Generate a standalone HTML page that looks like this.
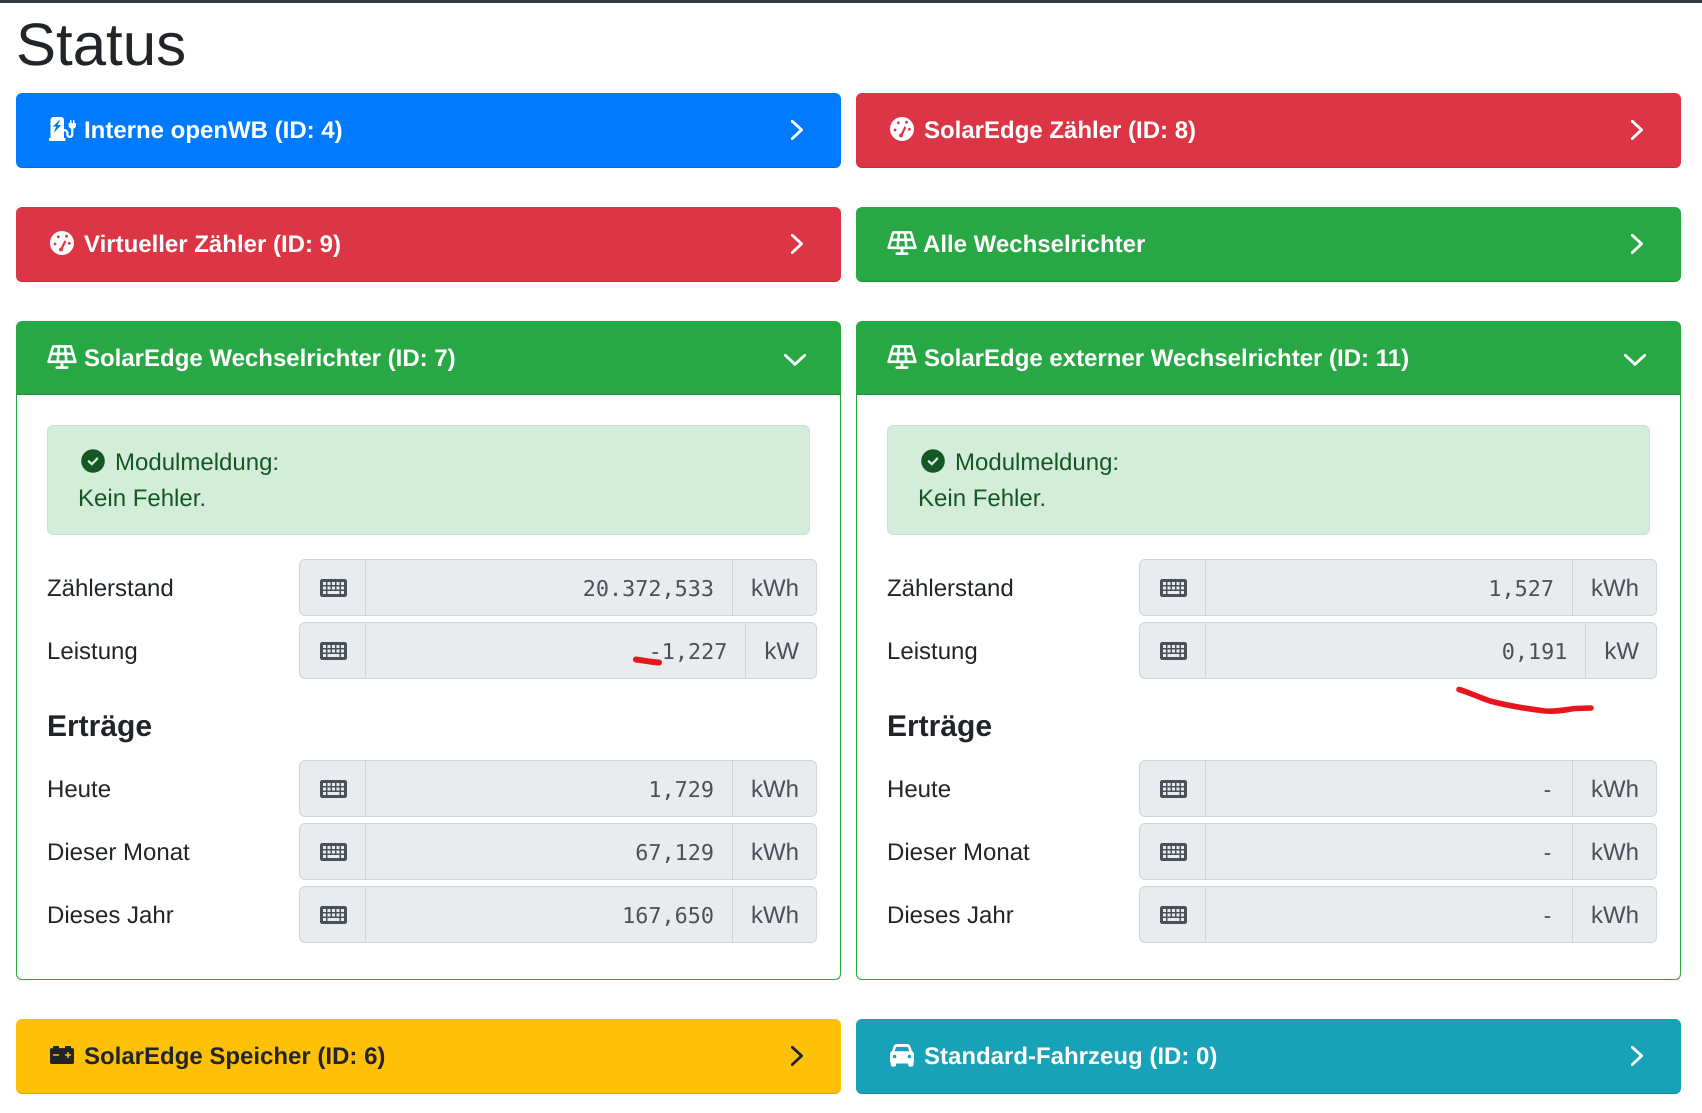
<!DOCTYPE html>
<html lang="de"><head><meta charset="utf-8"><title>Status</title>
<style>
html,body{margin:0;padding:0;background:#fff}
body{position:relative;width:1702px;height:1113px;overflow:hidden;font-family:"Liberation Sans",sans-serif;font-size:24px;color:#212529;text-rendering:geometricPrecision}
#top{position:absolute;left:0;top:0;width:1702px;height:3px;background:#343a40}
h1{position:absolute;left:16px;top:9px;margin:0;font-size:60px;line-height:72px;font-weight:400}
.hd{position:absolute;width:825px;height:75px;box-sizing:border-box;border-radius:6px;border-bottom:1px solid rgba(0,0,0,.125);color:#fff}
.hd b{position:absolute;left:68px;top:20px;line-height:36px;font-weight:700;white-space:nowrap}
.hd svg{position:absolute}
.hd.open{border-radius:6px 6px 0 0;height:74px}
.blue{background:#007bff}.red{background:#dc3545}.green{background:#28a745}.yellow{background:#ffc107;color:#212529}.teal{background:#17a2b8}
.box{position:absolute;top:394px;width:825px;height:586px;box-sizing:border-box;border:1px solid #28a745;border-top:0;border-radius:0 0 6px 6px}
.alert{position:absolute;top:425px;width:763px;height:110px;box-sizing:border-box;background:#d4edda;border:1px solid #c3e6cb;border-radius:6px;color:#155724}
.alert span{position:absolute;line-height:36px;white-space:nowrap}
.alert svg{position:absolute;left:33px;top:23px}
.lb{position:absolute;line-height:36px;white-space:nowrap}
.h{font-weight:700;font-size:30px}
.g{position:absolute;width:518px;height:57px;box-sizing:border-box;background:#e9ecef;border:1px solid #ced4da;border-radius:6px;display:flex;align-items:stretch;color:#495057}
.g .i{width:66px;flex:none;border-right:1px solid #ced4da;box-sizing:border-box;position:relative}
.g .i svg{position:absolute;left:19.5px;top:16px}
.g .v{flex:1;text-align:right;padding-right:18px;line-height:59px;font-family:"DejaVu Sans Mono","Liberation Mono",monospace;font-size:21.8px}
.g .u{flex:none;padding:0 17px 0 18px;border-left:1px solid #ced4da;line-height:58px}
#ink{position:absolute;left:0;top:0}
</style></head><body>
<div id="top"></div>
<h1>Status</h1>

<div class="hd blue" style="left:16px;top:93px"><svg style="left:33px;top:24px" width="27" height="24" viewBox="0 0 576 512" fill="#fff"><path d="M336 448H16c-8.84 0-16 7.16-16 16v32c0 8.84 7.16 16 16 16h320c8.84 0 16-7.16 16-16v-32c0-8.84-7.16-16-16-16zm208-320V80c0-8.84-7.16-16-16-16s-16 7.16-16 16v48h-32V80c0-8.84-7.16-16-16-16s-16 7.16-16 16v48h-16c-8.84 0-16 7.16-16 16v32c0 35.76 23.62 65.69 56 75.93v118.49c0 13.95-9.5 26.92-23.26 29.19C431.22 402.5 416 388.99 416 372v-28c0-48.6-39.4-88-88-88h-8V64c0-35.35-28.65-64-64-64H96C60.65 0 32 28.65 32 64v400h288V304h8c22.09 0 40 17.91 40 40v24.61c0 39.67 28.92 75.16 68.41 79.01C481.71 452.05 520 416.41 520 372V251.93c32.38-10.24 56-40.17 56-75.93v-32c0-8.84-7.16-16-16-16h-16z"/><path fill="#007bff" d="M215 72 80 205h72L100 341 262 170h-78l52-98z"/></svg><b>Interne openWB (ID: 4)</b><svg style="left:775px;top:27px" width="12" height="20" viewBox="0 0 12 20" fill="none" stroke="#fff" stroke-width="2.8" stroke-linecap="round" stroke-linejoin="round"><path d="M1.2 1.2 10.6 9.8 1.2 18.6"/></svg></div>
<div class="hd red" style="left:856px;top:93px"><svg style="left:34px;top:24px" width="24" height="24" viewBox="0 0 24 24"><circle cx="12" cy="12" r="12" fill="#fff"/><g fill="#dc3545"><circle cx="5" cy="13" r="1.4"/><circle cx="8.3" cy="5.8" r="1.4"/><circle cx="16.5" cy="5.2" r="1.4"/><circle cx="19.3" cy="12.3" r="1.4"/><circle cx="11" cy="18.5" r="1.9"/></g><path d="M11 19 15 10.7" stroke="#dc3545" stroke-width="2.2" stroke-linecap="round"/></svg><b>SolarEdge Zähler (ID: 8)</b><svg style="left:775px;top:27px" width="12" height="20" viewBox="0 0 12 20" fill="none" stroke="#fff" stroke-width="2.8" stroke-linecap="round" stroke-linejoin="round"><path d="M1.2 1.2 10.6 9.8 1.2 18.6"/></svg></div>
<div class="hd red" style="left:16px;top:207px"><svg style="left:34px;top:24px" width="24" height="24" viewBox="0 0 24 24"><circle cx="12" cy="12" r="12" fill="#fff"/><g fill="#dc3545"><circle cx="5" cy="13" r="1.4"/><circle cx="8.3" cy="5.8" r="1.4"/><circle cx="16.5" cy="5.2" r="1.4"/><circle cx="19.3" cy="12.3" r="1.4"/><circle cx="11" cy="18.5" r="1.9"/></g><path d="M11 19 15 10.7" stroke="#dc3545" stroke-width="2.2" stroke-linecap="round"/></svg><b>Virtueller Zähler (ID: 9)</b><svg style="left:775px;top:27px" width="12" height="20" viewBox="0 0 12 20" fill="none" stroke="#fff" stroke-width="2.8" stroke-linecap="round" stroke-linejoin="round"><path d="M1.2 1.2 10.6 9.8 1.2 18.6"/></svg></div>
<div class="hd green" style="left:856px;top:207px"><svg style="left:31px;top:24px" width="30" height="24" viewBox="0 0 30 24" fill="none" stroke="#fff" stroke-linecap="round" stroke-linejoin="round"><path stroke-width="2.6" d="M6.2 1.4H23.8L28.4 16.8H1.6ZM12 1.4 10.6 16.8M18 1.4 19.4 16.8M3.9 8.8H26.1"/><path stroke-width="2.8" d="M15 17V22.6M9.9 22.6H20.1"/></svg><b style="left:67px">Alle Wechselrichter</b><svg style="left:775px;top:27px" width="12" height="20" viewBox="0 0 12 20" fill="none" stroke="#fff" stroke-width="2.8" stroke-linecap="round" stroke-linejoin="round"><path d="M1.2 1.2 10.6 9.8 1.2 18.6"/></svg></div>

<div class="box" style="left:16px"></div>
<div class="box" style="left:856px"></div>

<div class="hd green open" style="left:16px;top:321px"><svg style="left:31px;top:24px" width="30" height="24" viewBox="0 0 30 24" fill="none" stroke="#fff" stroke-linecap="round" stroke-linejoin="round"><path stroke-width="2.6" d="M6.2 1.4H23.8L28.4 16.8H1.6ZM12 1.4 10.6 16.8M18 1.4 19.4 16.8M3.9 8.8H26.1"/><path stroke-width="2.8" d="M15 17V22.6M9.9 22.6H20.1"/></svg><b>SolarEdge Wechselrichter (ID: 7)</b><svg style="left:768px;top:33px" width="22" height="12" viewBox="0 0 22 12" fill="none" stroke="#fff" stroke-width="2.8" stroke-linecap="round" stroke-linejoin="round"><path d="M1.3 1.3 11 10.3 20.7 1.3"/></svg></div>
<div class="hd green open" style="left:856px;top:321px"><svg style="left:31px;top:24px" width="30" height="24" viewBox="0 0 30 24" fill="none" stroke="#fff" stroke-linecap="round" stroke-linejoin="round"><path stroke-width="2.6" d="M6.2 1.4H23.8L28.4 16.8H1.6ZM12 1.4 10.6 16.8M18 1.4 19.4 16.8M3.9 8.8H26.1"/><path stroke-width="2.8" d="M15 17V22.6M9.9 22.6H20.1"/></svg><b>SolarEdge externer Wechselrichter (ID: 11)</b><svg style="left:768px;top:33px" width="22" height="12" viewBox="0 0 22 12" fill="none" stroke="#fff" stroke-width="2.8" stroke-linecap="round" stroke-linejoin="round"><path d="M1.3 1.3 11 10.3 20.7 1.3"/></svg></div>

<div class="alert" style="left:47px"><svg width="24" height="24" viewBox="0 0 24 24"><circle cx="12" cy="12" r="11.8" fill="#155724"/><path d="M7.8 12.4 10.8 15.2 16.2 9.6" fill="none" stroke="#d4edda" stroke-width="2.3" stroke-linecap="round" stroke-linejoin="round"/></svg><span style="left:67px;top:19px">Modulmeldung:</span><span style="left:30px;top:55px">Kein Fehler.</span></div>
<div class="alert" style="left:887px"><svg width="24" height="24" viewBox="0 0 24 24"><circle cx="12" cy="12" r="11.8" fill="#155724"/><path d="M7.8 12.4 10.8 15.2 16.2 9.6" fill="none" stroke="#d4edda" stroke-width="2.3" stroke-linecap="round" stroke-linejoin="round"/></svg><span style="left:67px;top:19px">Modulmeldung:</span><span style="left:30px;top:55px">Kein Fehler.</span></div>

<div class="lb" style="left:47px;top:571px">Zählerstand</div>
<div class="lb" style="left:47px;top:634px">Leistung</div>
<div class="lb h" style="left:47px;top:709px">Erträge</div>
<div class="lb" style="left:47px;top:772px">Heute</div>
<div class="lb" style="left:47px;top:835px">Dieser Monat</div>
<div class="lb" style="left:47px;top:898px">Dieses Jahr</div>
<div class="lb" style="left:887px;top:571px">Zählerstand</div>
<div class="lb" style="left:887px;top:634px">Leistung</div>
<div class="lb h" style="left:887px;top:709px">Erträge</div>
<div class="lb" style="left:887px;top:772px">Heute</div>
<div class="lb" style="left:887px;top:835px">Dieser Monat</div>
<div class="lb" style="left:887px;top:898px">Dieses Jahr</div>

<div class="g" style="left:299px;top:559px"><div class="i"><svg width="27" height="24" viewBox="0 0 576 512" fill="#495057" fill-rule="evenodd"><path d="M48 64h480a48 48 0 0 1 48 48v288a48 48 0 0 1-48 48H48a48 48 0 0 1-48-48V112a48 48 0 0 1 48-48zM64 128h64v64H64zM160 128h64v64h-64zM256 128h64v64h-64zM352 128h64v64h-64zM448 128h64v64h-64zM64 224h64v64H64zM160 224h64v64h-64zM256 224h64v64h-64zM352 224h64v64h-64zM448 224h64v64h-64zM64 320h64v64H64zM160 320h256v64H160zM448 320h64v64h-64z"/></svg></div><div class="v">20.372,533</div><div class="u">kWh</div></div>
<div class="g" style="left:299px;top:622px"><div class="i"><svg width="27" height="24" viewBox="0 0 576 512" fill="#495057" fill-rule="evenodd"><path d="M48 64h480a48 48 0 0 1 48 48v288a48 48 0 0 1-48 48H48a48 48 0 0 1-48-48V112a48 48 0 0 1 48-48zM64 128h64v64H64zM160 128h64v64h-64zM256 128h64v64h-64zM352 128h64v64h-64zM448 128h64v64h-64zM64 224h64v64H64zM160 224h64v64h-64zM256 224h64v64h-64zM352 224h64v64h-64zM448 224h64v64h-64zM64 320h64v64H64zM160 320h256v64H160zM448 320h64v64h-64z"/></svg></div><div class="v">-1,227</div><div class="u">kW</div></div>
<div class="g" style="left:299px;top:760px"><div class="i"><svg width="27" height="24" viewBox="0 0 576 512" fill="#495057" fill-rule="evenodd"><path d="M48 64h480a48 48 0 0 1 48 48v288a48 48 0 0 1-48 48H48a48 48 0 0 1-48-48V112a48 48 0 0 1 48-48zM64 128h64v64H64zM160 128h64v64h-64zM256 128h64v64h-64zM352 128h64v64h-64zM448 128h64v64h-64zM64 224h64v64H64zM160 224h64v64h-64zM256 224h64v64h-64zM352 224h64v64h-64zM448 224h64v64h-64zM64 320h64v64H64zM160 320h256v64H160zM448 320h64v64h-64z"/></svg></div><div class="v">1,729</div><div class="u">kWh</div></div>
<div class="g" style="left:299px;top:823px"><div class="i"><svg width="27" height="24" viewBox="0 0 576 512" fill="#495057" fill-rule="evenodd"><path d="M48 64h480a48 48 0 0 1 48 48v288a48 48 0 0 1-48 48H48a48 48 0 0 1-48-48V112a48 48 0 0 1 48-48zM64 128h64v64H64zM160 128h64v64h-64zM256 128h64v64h-64zM352 128h64v64h-64zM448 128h64v64h-64zM64 224h64v64H64zM160 224h64v64h-64zM256 224h64v64h-64zM352 224h64v64h-64zM448 224h64v64h-64zM64 320h64v64H64zM160 320h256v64H160zM448 320h64v64h-64z"/></svg></div><div class="v">67,129</div><div class="u">kWh</div></div>
<div class="g" style="left:299px;top:886px"><div class="i"><svg width="27" height="24" viewBox="0 0 576 512" fill="#495057" fill-rule="evenodd"><path d="M48 64h480a48 48 0 0 1 48 48v288a48 48 0 0 1-48 48H48a48 48 0 0 1-48-48V112a48 48 0 0 1 48-48zM64 128h64v64H64zM160 128h64v64h-64zM256 128h64v64h-64zM352 128h64v64h-64zM448 128h64v64h-64zM64 224h64v64H64zM160 224h64v64h-64zM256 224h64v64h-64zM352 224h64v64h-64zM448 224h64v64h-64zM64 320h64v64H64zM160 320h256v64H160zM448 320h64v64h-64z"/></svg></div><div class="v">167,650</div><div class="u">kWh</div></div>

<div class="g" style="left:1139px;top:559px"><div class="i"><svg width="27" height="24" viewBox="0 0 576 512" fill="#495057" fill-rule="evenodd"><path d="M48 64h480a48 48 0 0 1 48 48v288a48 48 0 0 1-48 48H48a48 48 0 0 1-48-48V112a48 48 0 0 1 48-48zM64 128h64v64H64zM160 128h64v64h-64zM256 128h64v64h-64zM352 128h64v64h-64zM448 128h64v64h-64zM64 224h64v64H64zM160 224h64v64h-64zM256 224h64v64h-64zM352 224h64v64h-64zM448 224h64v64h-64zM64 320h64v64H64zM160 320h256v64H160zM448 320h64v64h-64z"/></svg></div><div class="v">1,527</div><div class="u">kWh</div></div>
<div class="g" style="left:1139px;top:622px"><div class="i"><svg width="27" height="24" viewBox="0 0 576 512" fill="#495057" fill-rule="evenodd"><path d="M48 64h480a48 48 0 0 1 48 48v288a48 48 0 0 1-48 48H48a48 48 0 0 1-48-48V112a48 48 0 0 1 48-48zM64 128h64v64H64zM160 128h64v64h-64zM256 128h64v64h-64zM352 128h64v64h-64zM448 128h64v64h-64zM64 224h64v64H64zM160 224h64v64h-64zM256 224h64v64h-64zM352 224h64v64h-64zM448 224h64v64h-64zM64 320h64v64H64zM160 320h256v64H160zM448 320h64v64h-64z"/></svg></div><div class="v">0,191</div><div class="u">kW</div></div>
<div class="g" style="left:1139px;top:760px"><div class="i"><svg width="27" height="24" viewBox="0 0 576 512" fill="#495057" fill-rule="evenodd"><path d="M48 64h480a48 48 0 0 1 48 48v288a48 48 0 0 1-48 48H48a48 48 0 0 1-48-48V112a48 48 0 0 1 48-48zM64 128h64v64H64zM160 128h64v64h-64zM256 128h64v64h-64zM352 128h64v64h-64zM448 128h64v64h-64zM64 224h64v64H64zM160 224h64v64h-64zM256 224h64v64h-64zM352 224h64v64h-64zM448 224h64v64h-64zM64 320h64v64H64zM160 320h256v64H160zM448 320h64v64h-64z"/></svg></div><div class="v">-</div><div class="u">kWh</div></div>
<div class="g" style="left:1139px;top:823px"><div class="i"><svg width="27" height="24" viewBox="0 0 576 512" fill="#495057" fill-rule="evenodd"><path d="M48 64h480a48 48 0 0 1 48 48v288a48 48 0 0 1-48 48H48a48 48 0 0 1-48-48V112a48 48 0 0 1 48-48zM64 128h64v64H64zM160 128h64v64h-64zM256 128h64v64h-64zM352 128h64v64h-64zM448 128h64v64h-64zM64 224h64v64H64zM160 224h64v64h-64zM256 224h64v64h-64zM352 224h64v64h-64zM448 224h64v64h-64zM64 320h64v64H64zM160 320h256v64H160zM448 320h64v64h-64z"/></svg></div><div class="v">-</div><div class="u">kWh</div></div>
<div class="g" style="left:1139px;top:886px"><div class="i"><svg width="27" height="24" viewBox="0 0 576 512" fill="#495057" fill-rule="evenodd"><path d="M48 64h480a48 48 0 0 1 48 48v288a48 48 0 0 1-48 48H48a48 48 0 0 1-48-48V112a48 48 0 0 1 48-48zM64 128h64v64H64zM160 128h64v64h-64zM256 128h64v64h-64zM352 128h64v64h-64zM448 128h64v64h-64zM64 224h64v64H64zM160 224h64v64h-64zM256 224h64v64h-64zM352 224h64v64h-64zM448 224h64v64h-64zM64 320h64v64H64zM160 320h256v64H160zM448 320h64v64h-64z"/></svg></div><div class="v">-</div><div class="u">kWh</div></div>

<div class="hd yellow" style="left:16px;top:1019px"><svg style="left:34px;top:24px" width="24" height="24" viewBox="0 0 512 512" fill="#212529"><path d="M480 110h-32V80c0-8.84-7.16-16-16-16h-96c-8.84 0-16 7.16-16 16v30H192V80c0-8.84-7.16-16-16-16H80c-8.84 0-16 7.16-16 16v30H32c-17.67 0-32 14.33-32 32v274c0 17.67 14.33 32 32 32h448c17.67 0 32-14.33 32-32V142c0-17.67-14.33-32-32-32zM192 264c0 4.42-3.58 8-8 8H72c-4.42 0-8-3.58-8-8v-16c0-4.42 3.58-8 8-8h112c4.42 0 8 3.58 8 8v16zm256 0c0 4.42-3.58 8-8 8h-40v40c0 4.42-3.58 8-8 8h-16c-4.42 0-8-3.58-8-8v-40h-40c-4.42 0-8-3.58-8-8v-16c0-4.42 3.58-8 8-8h40v-40c0-4.42 3.58-8 8-8h16c4.42 0 8 3.58 8 8v40h40c4.42 0 8 3.58 8 8v16z"/></svg><b>SolarEdge Speicher (ID: 6)</b><svg style="left:775px;top:27px" width="12" height="20" viewBox="0 0 12 20" fill="none" stroke="#212529" stroke-width="2.8" stroke-linecap="round" stroke-linejoin="round"><path d="M1.2 1.2 10.6 9.8 1.2 18.6"/></svg></div>
<div class="hd teal" style="left:856px;top:1019px"><svg style="left:34px;top:24px" width="24" height="24" viewBox="0 0 24 24" fill="#fff" fill-rule="evenodd"><path d="M7 1h10c1.5 0 2.7.8 3.2 2l1.8 5c1 .6 2 1.8 2 3.2v7c0 .8-.3 1.2-.6 1.6V22c0 1-.6 1.6-1.6 1.6h-2c-1 0-1.6-.6-1.6-1.6v-1.5H6V22c0 1-.6 1.6-1.6 1.6h-2C1.4 23.6.8 23 .8 22v-2.2C.3 19.4 0 19 0 18.2v-7c0-1.4 1-2.6 2-3.2l1.8-5C4.3 1.8 5.5 1 7 1zM7 3.9h10c.6 0 1 .3 1.2.8l1.2 3.6H4.6l1.2-3.6c.2-.5.6-.8 1.2-.8zM4.6 11.7a1.8 1.8 0 1 0 0 3.6 1.8 1.8 0 0 0 0-3.6zM19.4 11.7a1.8 1.8 0 1 0 0 3.6 1.8 1.8 0 0 0 0-3.6z"/></svg><b>Standard-Fahrzeug (ID: 0)</b><svg style="left:775px;top:27px" width="12" height="20" viewBox="0 0 12 20" fill="none" stroke="#fff" stroke-width="2.8" stroke-linecap="round" stroke-linejoin="round"><path d="M1.2 1.2 10.6 9.8 1.2 18.6"/></svg></div>

<svg id="ink" width="1702" height="1113" viewBox="0 0 1702 1113" fill="none" stroke="#e8151d" stroke-linecap="round" stroke-linejoin="round"><path d="M636 659.5C644 660.5 650 662 659 662.5" stroke-width="6"/><path d="M1459 689.5C1468 692 1478 697 1490 701 1505 705 1525 708.5 1545 711 1558 712 1566 709.5 1575 708.5L1591 708" stroke-width="5.6"/></svg>
</body></html>
